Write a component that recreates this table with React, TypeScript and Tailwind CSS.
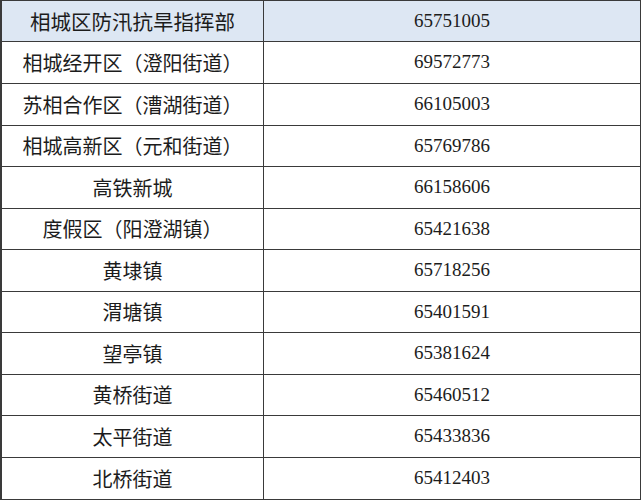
import React from 'react';

// Flood-control hotline table
const rows: { name: string; phone: string; h: string }[] = [
  { name: '相城经开区（澄阳街道）', phone: '69572773', h: 'h-[42px]' },
  { name: '苏相合作区（漕湖街道）', phone: '66105003', h: 'h-[42px]' },
  { name: '相城高新区（元和街道）', phone: '65769786', h: 'h-[41px]' },
  { name: '高铁新城', phone: '66158606', h: 'h-[42px]' },
  { name: '度假区（阳澄湖镇）', phone: '65421638', h: 'h-[41px]' },
  { name: '黄埭镇', phone: '65718256', h: 'h-[42px]' },
  { name: '渭塘镇', phone: '65401591', h: 'h-[41px]' },
  { name: '望亭镇', phone: '65381624', h: 'h-[42px]' },
  { name: '黄桥街道', phone: '65460512', h: 'h-[41px]' },
  { name: '太平街道', phone: '65433836', h: 'h-[42px]' },
  { name: '北桥街道', phone: '65412403', h: 'h-[41px]' },
];

const cjk = "font-['Noto_Sans_CJK_SC',sans-serif]";
const num = "font-['Liberation_Serif',serif]";

const App = () => {
  return (
    <div className="w-[641px] bg-white">
      <div className="border-t border-b border-r border-l-2 border-[#3a3a3a] text-[#1c1c1c]">
        {/* Header */}
        <div className="flex h-[41px] border-b border-[#3a3a3a] bg-[#dde7f3]">
          <div className={`w-[262px] border-r border-[#3a3a3a] flex items-center justify-center text-[20.5px] ${cjk}`}>
            相城区防汛抗旱指挥部
          </div>
          <div className={`flex-1 flex items-center justify-center text-[19px] ${num}`}>65751005</div>
        </div>

        {rows.map((r, i) => (
          <div
            key={r.name}
            className={`flex ${r.h} ${i < rows.length - 1 ? 'border-b border-[#3a3a3a]' : ''}`}
          >
            <div className={`w-[262px] border-r border-[#3a3a3a] flex items-center justify-center text-[20px] ${cjk}`}>
              {r.name}
            </div>
            <div className={`flex-1 flex items-center justify-center text-[19px] ${num}`}>{r.phone}</div>
          </div>
        ))}
      </div>
    </div>
  );
};

export default App;
